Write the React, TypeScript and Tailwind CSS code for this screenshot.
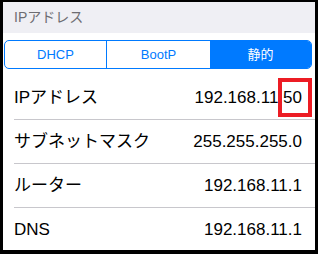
import React from "react";

const font = { fontFamily: '"Liberation Sans", "Noto Sans CJK JP", sans-serif' };

const rows = [
  { label: "IPアドレス", value: "192.168.11.50", mark: true },
  { label: "サブネットマスク", value: "255.255.255.0" },
  { label: "ルーター", value: "192.168.11.1" },
  { label: "DNS", value: "192.168.11.1" },
];

export default function App() {
  return (
    <div
      className="w-[318px] h-[254px] bg-black pt-[2px] pl-[3px] pr-[3px] pb-[4px] overflow-hidden"
      style={font}
    >
      <div className="relative h-full bg-white flex flex-col overflow-hidden">
        <div className="h-[31px] shrink-0 bg-[#efeff4] flex items-center pl-[11px] text-[14px] text-[#6d6d72]">
          IPアドレス
        </div>
        <div className="pt-[7px] pl-[1px] pr-[3px] shrink-0">
          <div className="h-[29px] flex border border-[#007aff] rounded-[5px] overflow-hidden text-[13px]">
            <div className="w-[102px] flex items-center justify-center text-[#007aff] border-r border-[#007aff]">
              DHCP
            </div>
            <div className="w-[103px] flex items-center justify-center text-[#007aff]">
              BootP
            </div>
            <div className="flex-1 flex items-center justify-center bg-[#007aff] text-white">
              静的
            </div>
          </div>
        </div>
        <div className="mt-[7px] flex flex-col">
          {rows.map((r, i) => (
            <div key={i} className="relative h-[44px] shrink-0 pl-[11px]">
              <div className="h-full flex items-center justify-between pr-[13px] text-[17px] text-black border-b border-[#c8c7cc]">
                <span>{r.label}</span>
                <span>{r.value}</span>
              </div>
              {r.mark && (
                <div className="absolute left-[275px] top-[2px] w-[34px] h-[39px] border-[4px] border-[#ec1c24]" />
              )}
            </div>
          ))}
        </div>
      </div>
    </div>
  );
}
